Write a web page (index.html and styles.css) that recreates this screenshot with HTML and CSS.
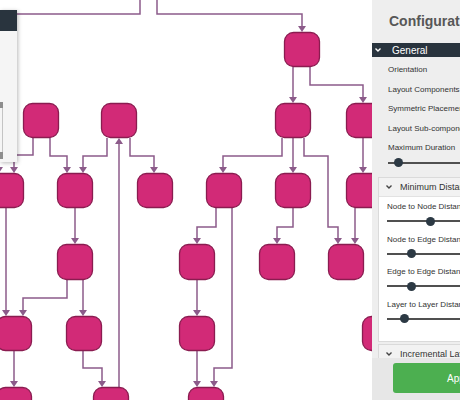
FILE: index.html
```html
<!DOCTYPE html>
<html>
<head>
<meta charset="utf-8">
<link rel="stylesheet" href="styles.css">
</head>
<body>
<div class="app">
  <main class="canvas">
    <svg class="graph" width="372" height="400" viewBox="0 0 372 400">
      <g class="edges">
        <path d="M140,0 V14 H14 V167"/>
        <path d="M157,0 V14 H302 V26"/>
        <path d="M293,67 V97"/>
        <path d="M310,67 V85 H363 V97"/>
        <path d="M282,138 V156 H223 V167"/>
        <path d="M293,138 V167"/>
        <path d="M304,138 V156 H328 V227 H338 V238"/>
        <path d="M363,138 V167"/>
        <path d="M355,208 V238"/>
        <path d="M216,208 V227 H197 V238"/>
        <path d="M232,208 V368 H214 V381"/>
        <path d="M293,208 V227 H277 V238"/>
        <path d="M197,280 V310"/>
        <path d="M197,351 V381"/>
        <path d="M33,138 V155 H-1 V167"/>
        <path d="M50,138 V156 H67 V167"/>
        <path d="M107,138 V156 H83 V167"/>
        <path d="M130,138 V156 H154 V167"/>
        <path d="M119,387 V144"/>
        <path d="M6,208 V310"/>
        <path d="M75,208 V238"/>
        <path d="M67,280 V298 H23 V310"/>
        <path d="M83,280 V310"/>
        <path d="M14,351 V381"/>
        <path d="M83,351 V368 H102 V381"/>
      </g>
      <g class="arrows">
        <polygon points="10,167 18,167 14,173"/>
        <polygon points="298,26 306,26 302,32"/>
        <polygon points="289,97 297,97 293,103"/>
        <polygon points="359,97 367,97 363,103"/>
        <polygon points="219,167 227,167 223,173"/>
        <polygon points="289,167 297,167 293,173"/>
        <polygon points="334,238 342,238 338,244"/>
        <polygon points="359,167 367,167 363,173"/>
        <polygon points="351,238 359,238 355,244"/>
        <polygon points="193,238 201,238 197,244"/>
        <polygon points="210,381 218,381 214,387"/>
        <polygon points="273,238 281,238 277,244"/>
        <polygon points="193,310 201,310 197,316"/>
        <polygon points="193,381 201,381 197,387"/>
        <polygon points="-5,167 3,167 -1,173"/>
        <polygon points="63,167 71,167 67,173"/>
        <polygon points="79,167 87,167 83,173"/>
        <polygon points="150,167 158,167 154,173"/>
        <polygon points="115,144 123,144 119,138"/>
        <polygon points="2,310 10,310 6,316"/>
        <polygon points="71,238 79,238 75,244"/>
        <polygon points="19,310 27,310 23,316"/>
        <polygon points="79,310 87,310 83,316"/>
        <polygon points="10,381 18,381 14,387"/>
        <polygon points="98,381 106,381 102,387"/>
      </g>
      <g class="nodes">
        <rect x="23.5" y="103.5" width="35" height="34" rx="9"/>
        <rect x="101.5" y="103.5" width="35" height="34" rx="9"/>
        <rect x="-11.5" y="173.5" width="35" height="34" rx="9"/>
        <rect x="57.5" y="173.5" width="35" height="34" rx="9"/>
        <rect x="137.5" y="173.5" width="35" height="34" rx="9"/>
        <rect x="284.5" y="32.5" width="35" height="34" rx="9"/>
        <rect x="275.5" y="103.5" width="35" height="34" rx="9"/>
        <rect x="346.5" y="103.5" width="35" height="34" rx="9"/>
        <rect x="206.5" y="173.5" width="35" height="34" rx="9"/>
        <rect x="275.5" y="173.5" width="35" height="34" rx="9"/>
        <rect x="346.5" y="173.5" width="35" height="34" rx="9"/>
        <rect x="57.5" y="244.5" width="35" height="35" rx="9"/>
        <rect x="179.5" y="244.5" width="35" height="35" rx="9"/>
        <rect x="259.5" y="244.5" width="35" height="35" rx="9"/>
        <rect x="328.5" y="244.5" width="35" height="35" rx="9"/>
        <rect x="-3.5" y="316.5" width="35" height="34" rx="9"/>
        <rect x="66.5" y="316.5" width="35" height="34" rx="9"/>
        <rect x="179.5" y="316.5" width="35" height="34" rx="9"/>
        <rect x="362.5" y="316.5" width="35" height="34" rx="9"/>
        <rect x="-3.5" y="387.5" width="35" height="34" rx="9"/>
        <rect x="93.5" y="387.5" width="35" height="34" rx="9"/>
        <rect x="188.5" y="387.5" width="35" height="34" rx="9"/>
      </g>
    </svg>
    <div class="overview">
      <div class="overview-head"></div>
      <div class="vslider">
        <div class="vhandle"></div>
        <div class="vline"></div>
        <div class="vhandle bottom"></div>
      </div>
    </div>
  </main>
  <aside class="sidebar">
    <div class="scroll">
      <h1 class="title">Configuration</h1>
      <div class="group-head">
        <svg class="chev" width="6" height="4" viewBox="0 0 6 4"><polyline points="0.5,0.5 3,3 5.5,0.5"/></svg>
        <span>General</span>
      </div>
      <div class="general">
        <div class="row">Orientation</div>
        <div class="row">Layout Components</div>
        <div class="row">Symmetric Placement</div>
        <div class="row">Layout Sub-components</div>
        <div class="row">Maximum Duration</div>
        <div class="slider"><div class="track"></div><div class="thumb" style="left:5.5px"></div></div>
      </div>
      <div class="box">
        <div class="box-head">
          <svg class="chev dark" width="6" height="4" viewBox="0 0 6 4"><polyline points="0.5,0.5 3,3 5.5,0.5"/></svg>
          <span>Minimum Distances</span>
        </div>
        <div class="box-body">
          <div class="field">
            <div class="label">Node to Node Distance</div>
            <div class="slider"><div class="track"></div><div class="thumb" style="left:38.5px"></div></div>
          </div>
          <div class="field">
            <div class="label">Node to Edge Distance</div>
            <div class="slider"><div class="track"></div><div class="thumb" style="left:19.5px"></div></div>
          </div>
          <div class="field">
            <div class="label">Edge to Edge Distance</div>
            <div class="slider"><div class="track"></div><div class="thumb" style="left:19.5px"></div></div>
          </div>
          <div class="field">
            <div class="label">Layer to Layer Distance</div>
            <div class="slider"><div class="track"></div><div class="thumb" style="left:12.5px"></div></div>
          </div>
        </div>
      </div>
      <div class="box collapsed">
        <div class="box-head">
          <svg class="chev dark" width="6" height="4" viewBox="0 0 6 4"><polyline points="0.5,0.5 3,3 5.5,0.5"/></svg>
          <span>Incremental Layout</span>
        </div>
      </div>
    </div>
    <div class="footer"><button class="apply">Apply</button></div>
  </aside>
</div>
</body>
</html>
```
FILE: styles.css
```css
* { box-sizing: border-box; }
html, body { margin: 0; padding: 0; background: #ffffff; }
body { font-family: "Liberation Sans", Arial, sans-serif; color: #333; }

.app {
  display: grid;
  grid-template-columns: 372px 175px;
  width: 460px;
  height: 400px;
  overflow: hidden;
}

.canvas {
  position: relative;
  overflow: hidden;
  background: #fff;
}
.graph { display: block; }
.edges path { fill: none; stroke: #8c5b8a; stroke-width: 1.5; }
.arrows polygon { fill: #8c5b8a; }
.nodes rect { fill: #d22a77; stroke: #8a1c50; stroke-width: 1.3; }

.overview {
  position: absolute;
  left: 0;
  top: 10px;
  width: 17px;
  height: 152px;
  background: #f5f5f5;
  box-shadow: 1px 1px 4px rgba(0,0,0,0.28);
}
.overview-head { height: 21px; background: #29343e; }
.vslider {
  margin-top: 71px;
  display: flex;
  flex-direction: column;
  width: 4px;
}
.vhandle { width: 3px; height: 6px; background: #8e8e8e; }
.vhandle.bottom { height: 7px; }
.vline { width: 1px; height: 44px; margin-left: 2px; background: #c4c4c4; }

.sidebar {
  display: flex;
  flex-direction: column;
  height: 400px;
  background: #eeeeee;
}
.scroll { flex: 1; overflow: hidden; }
.title {
  margin: 0;
  height: 43px;
  padding: 13px 0 0 17px;
  font-size: 14px;
  line-height: 17px;
  font-weight: bold;
  color: #575757;
  white-space: nowrap;
}
.group-head {
  height: 14px;
  background: #29343e;
  color: #fff;
  font-size: 10px;
  display: flex;
  align-items: center;
  padding-left: 3px;
}
.chev { margin-right: 11px; flex: none; }
.chev polyline { fill: none; stroke: #fff; stroke-width: 1.4; }
.chev.dark { margin-right: 8px; }
.chev.dark polyline { stroke: #444; }

.general { padding: 3px 0 0 16px; }
.row { height: 19.5px; line-height: 19.5px; font-size: 8px; color: #333; white-space: nowrap; }

.slider { position: relative; height: 10px; }
.track { position: absolute; left: 0; right: 0; top: 4px; height: 2px; background: #505050; }
.thumb { position: absolute; top: 0.5px; width: 9px; height: 9px; border-radius: 50%; background: #2c3944; }

.box {
  margin: 9.5px 6px 0 6px;
  border: 1px solid #dadada;
  background: #fff;
}
.box.collapsed { margin-top: 2px; }
.box-head {
  height: 19px;
  background: #f2f2f2;
  display: flex;
  align-items: center;
  padding-left: 7px;
  font-size: 9px;
  color: #333;
  white-space: nowrap;
  border-bottom: 1px solid #e2e2e2;
}
.box-body { padding: 5px 8px 17px 8px; }
.field + .field { margin-top: 8.5px; }
.label { height: 10px; line-height: 10px; font-size: 8px; color: #333; white-space: nowrap; margin-bottom: 4px; }

.footer {
  height: 42px;
  background: #e7e7e7;
  padding: 5px 21px 0 21px;
}
.apply {
  display: block;
  width: 133px;
  height: 30px;
  border: none;
  border-radius: 3px;
  background: #4caf50;
  color: #fff;
  font-family: "Liberation Sans", Arial, sans-serif;
  font-size: 10px;
  padding: 0;
}
```
